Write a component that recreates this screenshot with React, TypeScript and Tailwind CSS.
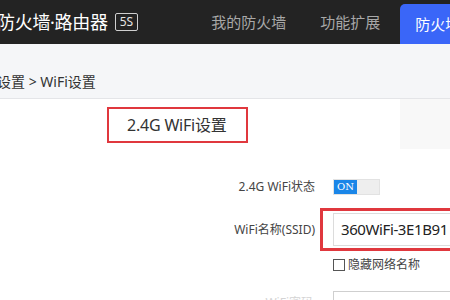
import React from "react";

export default function App() {
  const font = { fontFamily: '"Noto Sans", "Noto Sans CJK SC", sans-serif' };
  return (
    <div className="w-[450px] h-[300px] overflow-hidden bg-white relative" style={font}>
      {/* header */}
      <div className="h-[44px] bg-[#232323] flex items-end">
        <div className="h-[44px] flex items-center -ml-[3px] whitespace-nowrap">
          <span className="text-[18px] text-white leading-none tracking-[-0.3px]">防火墙·路由器</span>
          <span className="ml-[7px] border border-[#cfcfcf] rounded-[2px] text-[12px] leading-none text-[#e5e5e5] px-[4px] py-[2px]">5S</span>
        </div>
        <div className="h-[44px] flex items-center ml-[73px] text-[15px] text-[#a8a8a8] whitespace-nowrap">我的防火墙</div>
        <div className="h-[44px] flex items-center ml-[34px] text-[15px] text-[#a8a8a8] whitespace-nowrap">功能扩展</div>
        <div className="h-[40px] flex-1 ml-[20px] bg-[#3a66f8] rounded-tl-[5px] flex items-center pl-[15px] text-[15px] text-white whitespace-nowrap overflow-hidden">防火墙</div>
      </div>
      {/* breadcrumb strip */}
      <div className="h-[55px] bg-[#f5f6f8] border-b border-[#e4e5e8] flex items-end pb-[9px] -ml-[3px]">
        <span className="text-[14px] text-[#333] leading-none whitespace-nowrap">设置 &gt; WiFi设置</span>
      </div>
      {/* content */}
      <div className="flex">
        <div className="ml-[107px] mt-[8px] w-[141px] h-[36px] border-2 border-[#e0383e] flex items-center pl-[18px] text-[16px] text-[#333] whitespace-nowrap tracking-[-0.2px]">2.4G WiFi设置</div>
        <div className="ml-auto w-[50px] h-[50px] bg-[#f8f8f8]"></div>
      </div>
      <div className="grid grid-cols-[315px_1fr] gap-x-[18px] mt-[30px] text-[12px] text-[#444]">
        <div className="text-right h-[16px] leading-[16px] whitespace-nowrap">2.4G WiFi状态</div>
        <div className="flex h-[16px] w-[47px] border border-[#e2e2e2] bg-[#eeeeee]">
          <div className="w-[23px] h-full bg-[#1a86e8] text-white text-[10px] leading-[14px] text-center" style={{ fontFamily: '"DejaVu Serif", serif' }}>ON</div>
        </div>
        <div className="text-right self-center mt-[14px] whitespace-nowrap">WiFi名称(SSID)</div>
        <div className="mt-[13px] -ml-[13px] h-[43px] border-[3px] border-[#e0383e] border-r-0 pl-[10px] pt-[2px]">
          <div className="h-[33px] border border-[#dcdcdc] border-r-0 flex items-center pl-[7px] text-[15px] tracking-[-0.4px] text-[#222] whitespace-nowrap overflow-hidden">360WiFi-3E1B91</div>
        </div>
        <div></div>
        <div className="flex items-center mt-[7px] h-[14px] whitespace-nowrap">
          <div className="w-[12px] h-[12px] border border-[#555] bg-white"></div>
          <span className="ml-[3px]">隐藏网络名称</span>
        </div>
        <div className="text-right text-[#d4d4d4] mt-[22px] pr-[2px] whitespace-nowrap">WiFi密码</div>
        <div className="mt-[19px] h-[30px] border border-[#cfcfcf] border-r-0"></div>
      </div>
    </div>
  );
}
